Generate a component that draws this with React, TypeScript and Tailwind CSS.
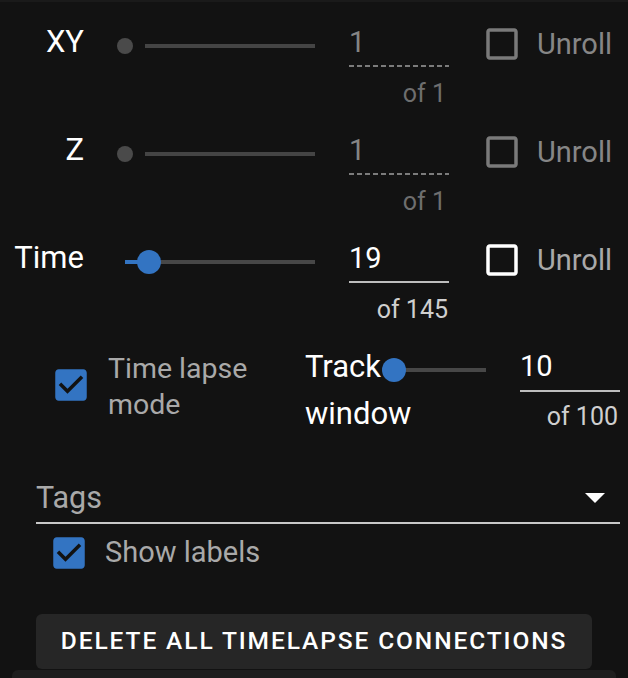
import React from 'react'

const BLUE = '#3374c2'

const BoxIcon = ({ color }: { color: string }) => (
  <svg width="42" height="42" viewBox="0 0 24 24">
    <path fill={color} d="M19 5v14H5V5h14m0-2H5c-1.1 0-2 .9-2 2v14c0 1.1.9 2 2 2h14c1.1 0 2-.9 2-2V5c0-1.1-.9-2-2-2z" />
  </svg>
)

const CheckedIcon = () => (
  <svg width="42" height="42" viewBox="0 0 24 24">
    <path fill={BLUE} d="M19 3H5c-1.11 0-2 .9-2 2v14c0 1.1.89 2 2 2h14c1.11 0 2-.9 2-2V5c0-1.1-.89-2-2-2zm-9 14l-5-5 1.41-1.41L10 14.17l7.59-7.59L19 8l-9 9z" />
  </svg>
)

interface SliderProps {
  trackWidth: number
  value: number
  min: number
  max: number
  disabled?: boolean
}

// thumb radius is 12px, so the box is track + 24
const Slider = ({ trackWidth, value, min, max, disabled }: SliderProps) => {
  const offset = ((value - min) / (max - min)) * trackWidth
  if (disabled) {
    return (
      <div className="relative h-6" style={{ width: trackWidth + 24 }}>
        <div className="absolute left-[32px] right-[12px] top-[10px] h-1 bg-[#444444]" />
        <div className="absolute left-[4px] top-1 h-4 w-4 rounded-full bg-[#4a4a4a]" />
      </div>
    )
  }
  return (
    <div className="relative h-6" style={{ width: trackWidth + 24 }}>
      <div className="absolute left-3 right-3 top-[10px] h-1 bg-[#474747]" />
      <div className="absolute left-3 top-[10px] h-1 bg-[#3374c2]" style={{ width: offset }} />
      <div className="absolute top-0 h-6 w-6 rounded-full bg-[#3374c2]" style={{ left: offset }} />
    </div>
  )
}

interface DimProps {
  label: string
  value: number
  max: number
  disabled?: boolean
}

const DimRow = ({ label, value, max, disabled }: DimProps) => (
  <div className="flex h-[108px] items-start">
    <div className="mt-[24px] w-[84px] text-right text-[31px] leading-[36px] text-white">{label}</div>
    <div className="ml-[29px] mt-[34px]">
      <Slider trackWidth={190} value={value} min={1} max={max} disabled={disabled} />
    </div>
    <div className="ml-[22px] mt-[25px] w-[100px]">
      <div className={disabled ? 'pb-[6px] text-[29px] leading-[34px] text-[#858585]' : 'pb-[6px] text-[29px] leading-[34px] text-white'}>
        {value}
      </div>
      {disabled ? (
        <div className="h-[2px] bg-[repeating-linear-gradient(to_right,#7c7c7c_0_5px,transparent_5px_8px)]" />
      ) : (
        <div className="h-[2px] bg-[#bdbdbd]" />
      )}
      <div className={disabled ? 'mt-[12px] pr-[3px] text-right text-[25px] leading-[30px] text-[#6e6e6e]' : 'mt-[12px] pr-[1px] text-right text-[25px] leading-[30px] text-[#cfcfcf]'}>
        of {max}
      </div>
    </div>
    <div className="ml-[32px] mt-[23px]">
      <BoxIcon color={disabled ? '#7a7a7a' : '#ffffff'} />
    </div>
    <div className={disabled ? 'ml-[14px] mt-[27px] text-[29px] leading-[34px] text-[#868686]' : 'ml-[14px] mt-[27px] text-[29px] leading-[34px] text-[#a9a9a9]'}>
      Unroll
    </div>
  </div>
)

export default function App() {
  return (
    <div className="h-[678px] w-[628px] overflow-hidden bg-[#121212] font-['Roboto',sans-serif] shadow-[inset_0_2px_0_#1a1a1a]">
      <DimRow label="XY" value={1} max={1} disabled />
      <DimRow label="Z" value={1} max={1} disabled />
      <DimRow label="Time" value={19} max={145} />

      {/* time lapse + track window */}
      <div className="flex h-[156px] items-start">
        <div className="ml-[50px] mt-[40px]">
          <CheckedIcon />
        </div>
        <div className="ml-[16px] mt-[27px] w-[197px] text-[28.5px] leading-[36px] text-[#a9a9a9]">
          Time lapse mode
        </div>
        <div className="mt-[19px] w-[68px] text-[31px] leading-[47px] text-white">Track window</div>
        <div className="mt-[34px]">
          <Slider trackWidth={101} value={10} min={1} max={100} />
        </div>
        <div className="ml-[22px] mt-[25px] w-[100px]">
          <div className="pb-[7px] text-[29px] leading-[34px] text-white">10</div>
          <div className="h-[2px] bg-[#bdbdbd]" />
          <div className="mt-[10px] pr-[2px] text-right text-[25px] leading-[30px] text-[#cfcfcf]">of 100</div>
        </div>
      </div>

      {/* Tags select */}
      <div className="ml-[36px] flex w-[584px] items-center justify-between border-b-2 border-[#c8c8c8] pb-[6px]">
        <span className="text-[30.5px] leading-[36px] text-[#a9a9a9]">Tags</span>
        <svg width="20" height="10" viewBox="0 0 20 10" className="mr-[15px]">
          <path d="M0 0h20L10 10z" fill="#ffffff" />
        </svg>
      </div>

      {/* Show labels */}
      <div className="flex h-[56px] items-start">
        <div className="ml-[48px] mt-[8px]">
          <CheckedIcon />
        </div>
        <div className="ml-[15px] mt-[11px] text-[29px] leading-[34px] text-[#a9a9a9]">Show labels</div>
      </div>

      <button className="ml-[36px] mt-[34px] flex h-[55px] w-[556px] items-center justify-center rounded-[6px] bg-[#262626] text-[24.5px] font-medium uppercase tracking-[1.9px] text-white">
        Delete all timelapse connections
      </button>

      <div className="ml-[12px] mt-[1px] h-[40px] w-[604px] rounded-t-[6px] bg-[#1e1e1e]" />
    </div>
  )
}
